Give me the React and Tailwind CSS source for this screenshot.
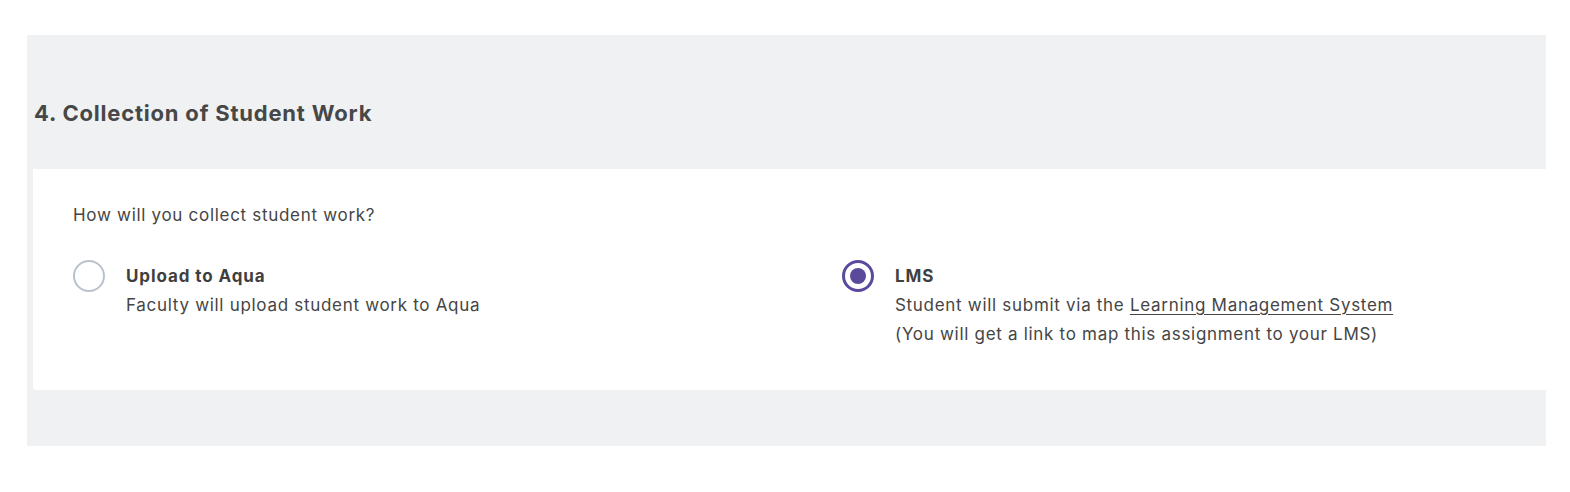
export default function App() {
  return (
    <div className="w-[1570px] h-[492px] overflow-hidden bg-white" style={{ fontFamily: 'Inter, "Noto Sans", sans-serif' }}>
      <div className="ml-[27px] mt-[35px] w-[1519px] h-[411px] bg-[#f0f1f3] flex flex-col">
        <h2 className="pl-[7px] pt-[63px] h-[134px] text-[22px] leading-[30px] tracking-[0.8px] font-bold text-[#474747]">
          4. Collection of Student Work
        </h2>
        <div className="ml-[6px] w-[1560px] h-[221px] bg-white rounded-bl-[4px] pl-[40px] pt-[34px]">
          <p className="text-[17px] leading-[24px] tracking-[0.7px] text-[#454545]">How will you collect student work?</p>
          <div className="mt-[33px] grid grid-cols-[769px_1fr]">
            <label className="flex items-start gap-[21px]">
              <span className="w-[32px] h-[32px] rounded-full border-2 border-[#b8c1ce] bg-white shrink-0" />
              <span className="flex flex-col text-[17px] leading-[29px] tracking-[0.7px] text-[#454545] pt-[2px]">
                <span className="font-bold text-[#3f3f3f] tracking-[0.9px]">Upload to Aqua</span>
                <span>Faculty will upload student work to Aqua</span>
              </span>
            </label>
            <label className="flex items-start gap-[21px]">
              <span className="w-[32px] h-[32px] rounded-full border-[3px] border-[#5b4a9c] bg-white shrink-0 flex items-center justify-center">
                <span className="w-[16px] h-[16px] rounded-full bg-[#5b4a9c]" />
              </span>
              <span className="flex flex-col text-[17px] leading-[29px] tracking-[0.7px] text-[#454545] pt-[2px]">
                <span className="font-bold text-[#3f3f3f] tracking-[0.9px]">LMS</span>
                <span>
                  Student will submit via the <span className="underline underline-offset-[3px]">Learning Management System</span>
                </span>
                <span>(You will get a link to map this assignment to your LMS)</span>
              </span>
            </label>
          </div>
        </div>
      </div>
    </div>
  );
}
